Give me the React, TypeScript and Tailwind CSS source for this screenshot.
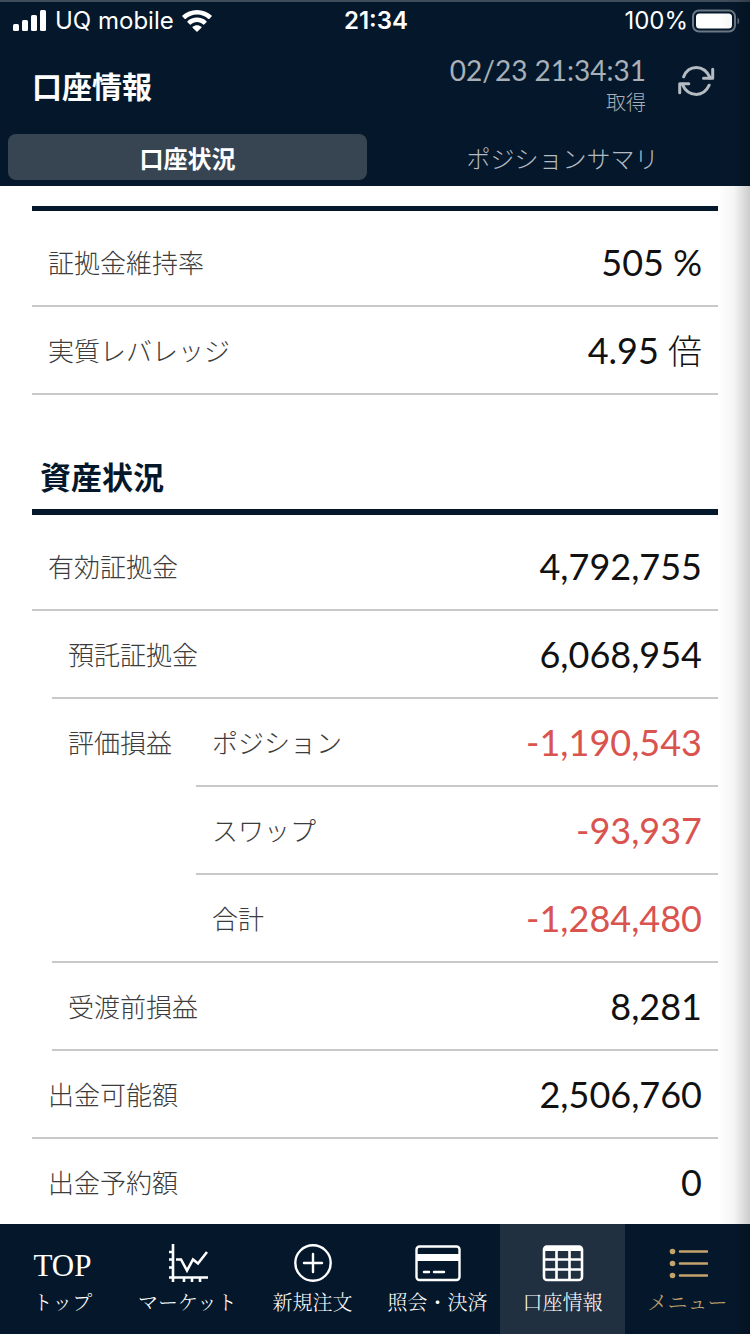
import React from "react";

interface ValueRowProps {
  label: string;
  value: string;
  unit?: string;
  labelSpan?: number;
}

const thClass =
  "border-b-2 border-[#c9c9c9] pl-4 pt-6 pb-[22px] text-left text-[26px] leading-10 font-light text-[#3c3c3c]";
const tdClass =
  "border-b-2 border-[#c9c9c9] pr-4 py-[23px] text-right text-4xl leading-10 font-normal whitespace-nowrap";

const Cells: React.FC<ValueRowProps> = ({
  label,
  value,
  unit,
  labelSpan = 1,
}) => (
  <>
    <th scope="row" colSpan={labelSpan} className={thClass}>
      {label}
    </th>
    <td
      className={`${tdClass} ${
        value.startsWith("-") ? "text-[#d9534f]" : "text-[#111111]"
      }`}
    >
      {value}
      {unit && (
        <span className="text-[34px] leading-none font-light"> {unit}</span>
      )}
    </td>
  </>
);

const StatusBar: React.FC = () => (
  <div className="grid grid-cols-3 items-center border-t-2 border-[#3f4c5c] pl-3 pr-2.5 h-10 font-['Inter','Noto_Sans_CJK_JP',sans-serif] text-2xl leading-9 text-white">
    <div className="flex items-center gap-2 whitespace-nowrap">
      <svg className="w-[35px] h-[22px]" viewBox="0 0 35 22" fill="currentColor">
        <rect x="1" y="14" width="6" height="7" rx="1.5" />
        <rect x="10" y="10" width="6" height="11" rx="1.5" />
        <rect x="19" y="5" width="6" height="16" rx="1.5" />
        <rect x="28" y="0" width="6" height="21" rx="1.5" />
      </svg>
      <span>UQ mobile</span>
      <svg className="w-[30px] h-[22px]" viewBox="0 0 30 22" fill="currentColor">
        <path d="M15 0C20.700 0 25.800 2.100 29.600 5.600Q30 6.100 29.600 6.500L27.200 8.900Q26.800 9.300 26.300 8.900C23.300 6.200 19.400 4.600 15 4.600S6.700 6.200 3.700 8.900Q3.200 9.300 2.800 8.900L.4 6.500Q0 6.100.4 5.600C4.200 2.100 9.300 0 15 0z" />
        <path d="M15 7.600C18.700 7.600 22 9 24.500 11.200Q25 11.700 24.500 12.200L22.100 14.500Q21.700 14.900 21.200 14.500C19.500 13 17.400 12.100 15 12.100S10.500 13 8.800 14.500Q8.300 14.900 7.900 14.500L5.500 12.200Q5 11.700 5.500 11.200C8 9 11.300 7.600 15 7.600z" />
        <path d="M15 15.200C16.700 15.200 18.200 15.800 19.400 16.800Q19.900 17.200 19.400 17.700L15.500 21.600Q15 22 14.500 21.600L10.600 17.700Q10.100 17.200 10.600 16.800C11.800 15.800 13.300 15.200 15 15.200z" />
      </svg>
    </div>
    <div className="text-center font-semibold">21:34</div>
    <div className="flex items-center justify-end gap-1">
      <span>100%</span>
      <svg className="w-12 h-6" viewBox="0 0 48 24" fill="none">
        <rect x="1" y="1.500" width="42" height="21" rx="6" stroke="#6d7885" strokeWidth="2" />
        <rect x="4" y="4.500" width="36" height="15" rx="3.500" fill="#fff" />
        <path d="M45.500 8.500c2 1 2.500 5.500 0 7z" fill="#6d7885" />
      </svg>
    </div>
  </div>
);

const Header: React.FC = () => (
  <header className="bg-[#05182b] pb-1.5">
    <StatusBar />
    <div className="flex justify-between h-[94px] pt-3 pl-8 pr-8">
      <h1 className="text-[30px] leading-[68px] font-bold text-white">
        口座情報
      </h1>
      <div className="flex gap-8">
        <div className="text-right text-[#a9b0b8]">
          <p className="text-[28px] leading-9">02/23 21:34:31</p>
          <p className="text-xl leading-7 font-light">取得</p>
        </div>
        <button type="button" aria-label="更新" className="self-start pt-3">
          <svg
            className="w-10 h-9"
            viewBox="0 0 40 36"
            fill="none"
            stroke="#b4bbc2"
            strokeWidth="3"
            strokeLinecap="round"
            strokeLinejoin="round"
          >
            <path d="M5.600 12.800C8.300 6.300 13 3.600 18.300 3.600c6.500 0 11 4 14 10.400" />
            <path d="M25.500 14.200H34.700V5.200" />
            <path d="M31.200 21.200C28.200 27.700 23.700 30.400 18.300 30.400c-6.500 0-11.300-4-14-10" />
            <path d="M10.800 19.700H1.700v9" />
          </svg>
        </button>
      </div>
    </div>
    <div role="tablist" className="grid grid-cols-2 gap-4 px-2">
      <button
        type="button"
        role="tab"
        aria-selected="true"
        className="rounded-lg bg-[#374553] pt-[7px] pb-[3px] text-2xl leading-9 font-bold text-white"
      >
        口座状況
      </button>
      <button
        type="button"
        role="tab"
        aria-selected="false"
        className="pt-[7px] pb-[3px] text-2xl leading-9 font-light text-[#b4bbc2]"
      >
        ポジションサマリ
      </button>
    </div>
  </header>
);

const MarketIcon: React.FC = () => (
  <svg className="w-10 h-10" viewBox="0 0 40 40" fill="none" stroke="currentColor" strokeWidth="2.600">
    <path d="M5 1v38M1 34.500h39M1 9h4M1 16.500h4M1 24.500h4M16 34v5M24 34v5M32 34v5" />
    <path d="M8 16.500h5l6 11 6-11 5 4 9-11.500" />
  </svg>
);

const OrderIcon: React.FC = () => (
  <svg className="w-10 h-10" viewBox="0 0 40 40" fill="none" stroke="currentColor" strokeWidth="2.400" strokeLinecap="round">
    <circle cx="20" cy="20" r="17.700" />
    <path d="M20 11v18M11 20h18" />
  </svg>
);

const CardIcon: React.FC = () => (
  <svg className="w-[46px] h-10" viewBox="0 0 46 40" fill="none" stroke="currentColor" strokeWidth="2.400">
    <rect x="1.500" y="3.500" width="43" height="33.500" rx="3" />
    <path d="M1 14.500h44" strokeWidth="7" />
    <path d="M9 29h5M19 29h10" strokeLinecap="round" />
  </svg>
);

const TableIcon: React.FC = () => (
  <svg className="w-[42px] h-10" viewBox="0 0 42 40" fill="none" stroke="currentColor" strokeWidth="2.600">
    <rect x="2" y="3.500" width="38" height="33.500" rx="3" />
    <path d="M3 5.500h36" strokeWidth="5" />
    <path d="M2 16.500h38M2 26.500h38M14.500 5v32M27.500 5v32" />
  </svg>
);

const MenuIcon: React.FC = () => (
  <svg className="w-10 h-10" viewBox="0 0 40 40" fill="none" stroke="currentColor" strokeWidth="2.600" strokeLinecap="round">
    <path d="M12 8.500h27M12 20.500h27M12 32.500h27" />
    <g fill="currentColor" stroke="none">
      <circle cx="4.500" cy="8.500" r="2.800" />
      <circle cx="4.500" cy="20.500" r="2.800" />
      <circle cx="4.500" cy="32.500" r="2.800" />
    </g>
  </svg>
);

const navItems = [
  {
    label: "トップ",
    icon: <span className="text-[31px] leading-10 pt-1.5">TOP</span>,
    color: "text-white",
  },
  { label: "マーケット", icon: <MarketIcon />, color: "text-white" },
  { label: "新規注文", icon: <OrderIcon />, color: "text-white" },
  { label: "照会・決済", icon: <CardIcon />, color: "text-white" },
  {
    label: "口座情報",
    icon: <TableIcon />,
    color: "text-white bg-[#203040]",
  },
  { label: "メニュー", icon: <MenuIcon />, color: "text-[#c4a46c]" },
];

const BottomNav: React.FC = () => (
  <nav className="grid grid-cols-6 bg-[#05182b] font-['Liberation_Serif','Noto_Serif_CJK_JP','Noto_Sans_CJK_JP',serif]">
    {navItems.map((item) => (
      <a
        key={item.label}
        href="#"
        className={`flex flex-col items-center pt-[19px] pb-4 whitespace-nowrap ${item.color}`}
      >
        <span className="flex items-center justify-center h-10">
          {item.icon}
        </span>
        <span className="mt-[5px] text-xl leading-[30px] font-light">
          {item.label}
        </span>
      </a>
    ))}
  </nav>
);

const App: React.FC = () => {
  return (
    <div
      lang="ja"
      className="relative flex flex-col h-screen bg-white font-['Lato','Noto_Sans_CJK_JP',sans-serif]"
    >
      <Header />

      <main className="flex-1 min-h-0 overflow-y-auto [scrollbar-width:none] px-8 pt-5">
        {/* Margin ratio */}
        <section className="border-t-5 border-[#05182b] pt-2">
          <table className="w-full border-separate border-spacing-0">
            <tbody>
              <tr>
                <Cells label="証拠金維持率" value="505 %" />
              </tr>
              <tr>
                <Cells label="実質レバレッジ" value="4.95" unit="倍" />
              </tr>
            </tbody>
          </table>
        </section>

        {/* Assets */}
        <section>
          <h2 className="pt-[60px] pb-2.5 pl-2 text-[31px] leading-[44px] font-bold text-[#05182b]">
            資産状況
          </h2>
          <div className="border-t-6 border-[#05182b] pt-2">
            <table className="w-full border-separate border-spacing-0">
              <colgroup>
                <col className="w-5" />
                <col className="w-36" />
                <col />
                <col />
              </colgroup>
              <tbody>
                <tr>
                  <Cells label="有効証拠金" value="4,792,755" labelSpan={3} />
                </tr>
                <tr>
                  <td rowSpan={5} />
                  <Cells label="預託証拠金" value="6,068,954" labelSpan={2} />
                </tr>
                <tr>
                  <th scope="rowgroup" rowSpan={3} className={`${thClass} align-top`}>
                    評価損益
                  </th>
                  <Cells label="ポジション" value="-1,190,543" />
                </tr>
                <tr>
                  <Cells label="スワップ" value="-93,937" />
                </tr>
                <tr>
                  <Cells label="合計" value="-1,284,480" />
                </tr>
                <tr>
                  <Cells label="受渡前損益" value="8,281" labelSpan={2} />
                </tr>
                <tr>
                  <Cells label="出金可能額" value="2,506,760" labelSpan={3} />
                </tr>
                <tr>
                  <Cells label="出金予約額" value="0" labelSpan={3} />
                </tr>
              </tbody>
            </table>
          </div>
        </section>
      </main>

      <BottomNav />

      {/* Edge shadow */}
      <div className="pointer-events-none absolute inset-y-0 right-0 w-8 bg-linear-to-r from-transparent via-black/4 to-black/20" />
    </div>
  );
};

export default App;
